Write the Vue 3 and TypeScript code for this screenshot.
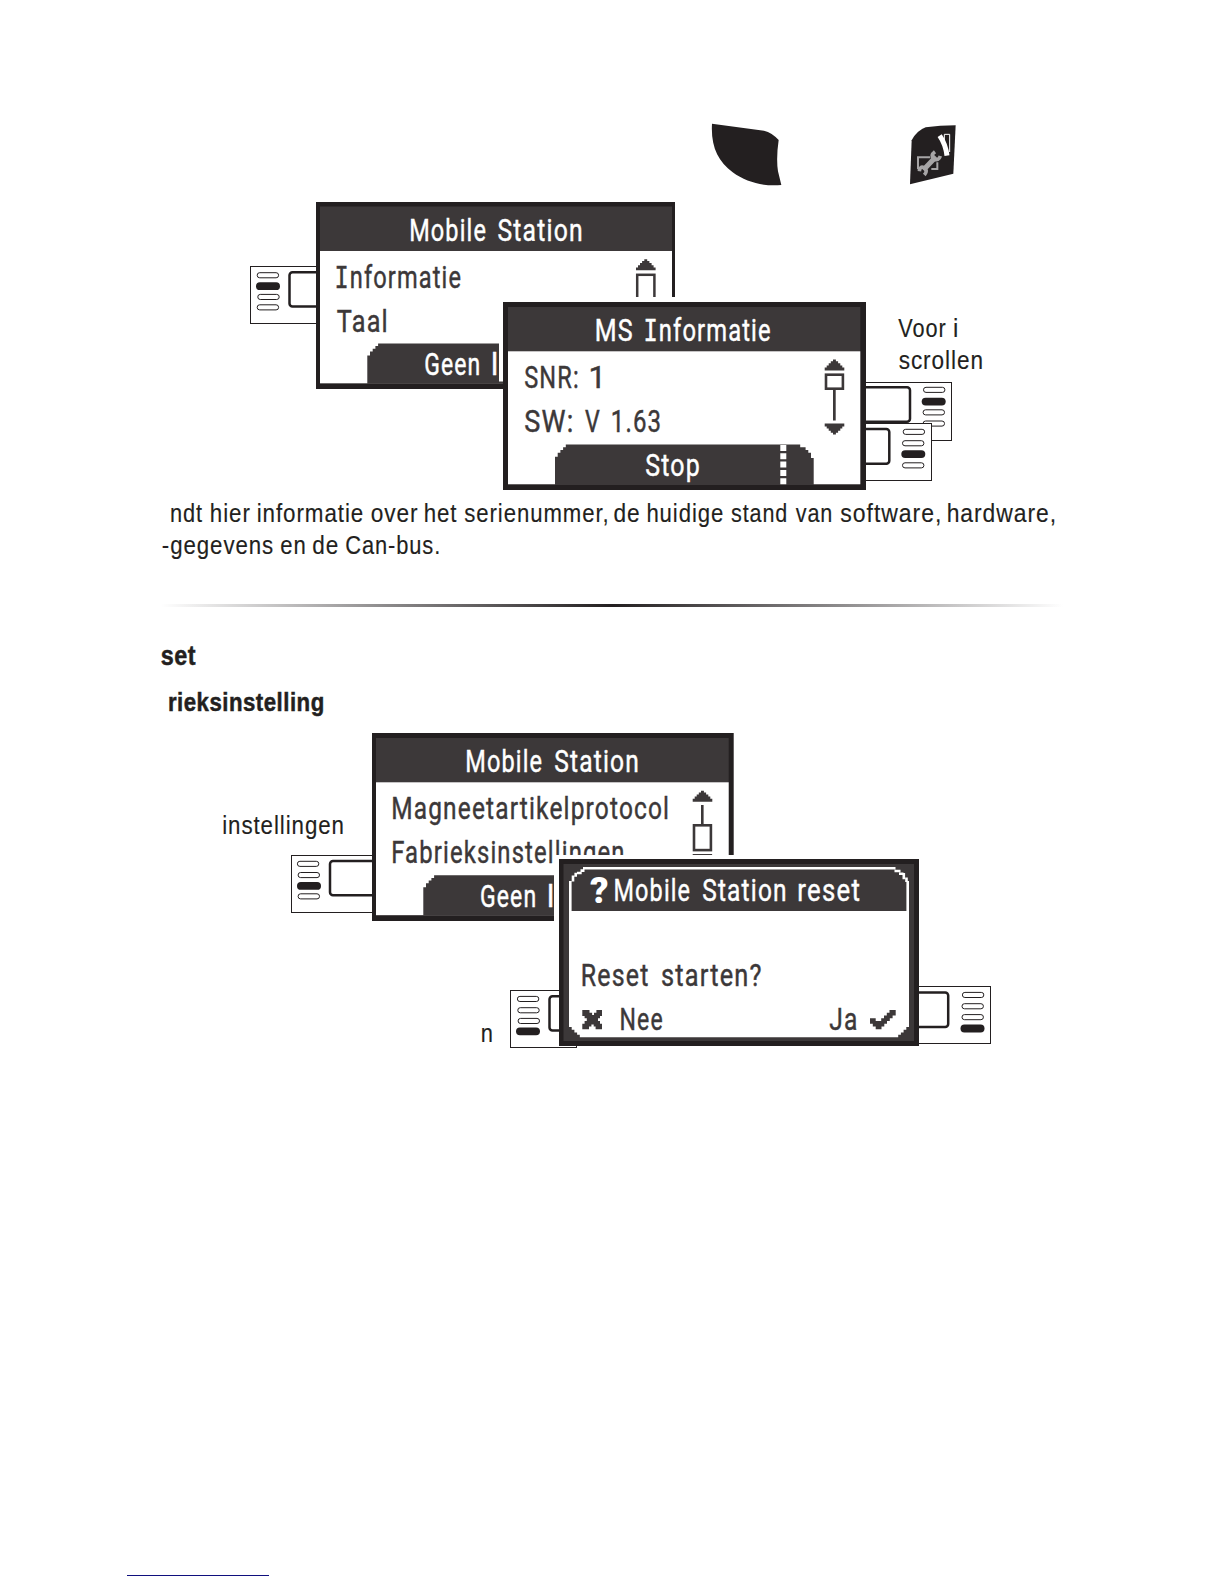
<script setup lang="ts">
import { h, type FunctionalComponent } from 'vue'

type Face = 'body' | 'bold' | 'lcd' | 'mark'
interface Word { s: string; a: number; b: number; y: number; face?: Face; size?: number; color?: string }

const faces: Record<Face, { family: string; weight: number; size: number; gap: number; ink: number; dy: number }> = {
  body: { family: '"Liberation Sans", Arial, sans-serif', weight: 400, size: 26.6, gap: 1.1, ink: 0.15, dy: 0 },
  bold: { family: '"Liberation Sans", Arial, sans-serif', weight: 700, size: 26.6, gap: 0.6, ink: 0.5, dy: 0 },
  lcd: { family: 'Roboto, sans-serif', weight: 400, size: 31, gap: 1.5, ink: 0.45, dy: 0.5 },
  mark: { family: 'Roboto, sans-serif', weight: 900, size: 37, gap: 0, ink: 0, dy: 0 },
}
const slab = '"DejaVu Sans Mono", monospace'
const pen = document.createElement('canvas').getContext('2d')!

function measure(s: string, family: string, weight: number, size: number) {
  pen.font = `${weight} ${size}px ${family}`
  const m = pen.measureText(s)
  return { left: m.actualBoundingBoxLeft, right: m.actualBoundingBoxRight, adv: m.width }
}

// Condenses a word so that its ink runs from a to b on baseline y.
const Fit: FunctionalComponent<{ w: Word }> = ({ w }) => {
  const f = faces[w.face ?? 'body']
  const size = w.size ?? f.size
  const slabbed = w.face === 'lcd' && w.s.startsWith('I')
  let left: number
  let right: number
  if (slabbed) {
    const i = measure('I', slab, 400, size)
    const rest = measure(w.s.slice(1), f.family, f.weight, size)
    left = i.left
    right = i.adv + rest.right
  } else {
    const m = measure(w.s, f.family, f.weight, size)
    left = m.left
    right = m.right
  }
  right += f.gap * (w.s.length - 1)
  const k = (w.b - w.a) / (left + right)
  const color = w.color ?? (w.face === 'lcd' ? '#3c3839' : '#231f20')
  return h('text', {
    transform: `translate(${w.a} ${w.y + f.dy}) scale(${k} 1)`,
    x: left,
    'font-family': f.family,
    'font-weight': f.weight,
    'font-size': size,
    'letter-spacing': f.gap,
    fill: color,
    stroke: color,
    'stroke-width': f.ink,
  }, slabbed ? [h('tspan', { 'font-family': slab }, 'I'), w.s.slice(1)] : w.s)
}
Fit.props = ['w']

const row = (y: number, face: Face, words: [string, number, number][], color?: string): Word[] =>
  words.map(([s, a, b]) => ({ s, a, b, y, face, color }))

const screenMain: Word[] = [
  ...row(240.3, 'lcd', [['Mobile', 410.7, 485.5], ['Station', 498.3, 581.7]], '#fff'),
  ...row(287, 'lcd', [['Informatie', 336.7, 460.7]]),
  ...row(331, 'lcd', [['Taal', 336.8, 386.5]]),
  ...row(374.7, 'lcd', [['Geen', 425, 479.5], ['l', 493, 496.8]], '#fff'),
]
const screenInfo: Word[] = [
  ...row(340.3, 'lcd', [['MS', 596.3, 632.3], ['Informatie', 645.7, 770.3]], '#fff'),
  ...row(387.3, 'lcd', [['SNR:', 525, 577.5], ['1', 590.5, 600.5]]),
  ...row(431.3, 'lcd', [['SW:', 525, 572], ['V', 585, 600], ['1.63', 612.3, 660]]),
  ...row(475.7, 'lcd', [['Stop', 646, 698.7]], '#fff'),
]
const sideNote: Word[] = [
  ...row(336.7, 'body', [['Voor', 898.3, 945.8], ['i', 954, 957.6]]),
  ...row(369, 'body', [['scrollen', 898.7, 982.3]]),
]
const paragraph: Word[] = [
  ...row(522.2, 'body', [
    ['ndt', 170.7, 202.5], ['hier', 210.7, 250], ['informatie', 257.5, 362.7], ['over', 371.5, 417.7],
    ['het', 424.5, 457], ['serienummer,', 464.3, 606.7], ['de', 614.3, 639], ['huidige', 647.2, 722.7],
    ['stand', 731, 786.7], ['van', 795.7, 831.7], ['software,', 840.3, 939.3], ['hardware,', 947.5, 1054],
  ]),
  ...row(554, 'body', [['-gegevens', 162.7, 273], ['en', 281, 305], ['de', 313, 337.5], ['Can-bus.', 346, 438.3]]),
]
const headings: Word[] = [
  { s: 'set', a: 160.7, b: 195.3, y: 664.7, face: 'bold', size: 28 },
  { s: 'rieksinstelling', a: 168.7, b: 323.2, y: 710.7, face: 'bold' },
]
const screenFactory: Word[] = [
  ...row(771.3, 'lcd', [['Mobile', 466.7, 541.7], ['Station', 555, 638]], '#fff'),
  ...row(818.3, 'lcd', [['Magneetartikelprotocol', 392.7, 668]]),
  ...row(862.3, 'lcd', [['Fabrieksinstellingen', 392.7, 623.7]]),
  ...row(906.3, 'lcd', [['Geen', 480.7, 535.3], ['l', 548.8, 552.6]], '#fff'),
]
const screenReset: Word[] = [
  { s: '?', a: 590, b: 607.7, y: 902.7, face: 'mark', color: '#fff' },
  ...row(900, 'lcd', [['Mobile', 615, 689.7], ['Station', 703, 785.7], ['reset', 799, 859.7]], '#fff'),
  ...row(985, 'lcd', [['Reset', 582.3, 648.3], ['starten?', 661.7, 761]]),
  ...row(1029.2, 'lcd', [['Nee', 621, 662.3], ['Ja', 829.3, 856.7]]),
]
const captions: Word[] = [
  ...row(833.7, 'body', [['instellingen', 223, 343.3]]),
  ...row(1041.7, 'body', [['n', 481.5, 492.2]]),
]

// Key blocks beside a display: outline, soft key and four marks, one of them lit.
interface Keys { x: number; y: number; w: number; h: number; key: [number, number, number, number]; lit: number; marks: [number, number][] }
const keysTop: Keys[] = [
  { x: 250.5, y: 266.5, w: 70, h: 57, key: [289.5, 272.2, 40, 34.3], lit: 1, marks: [[257.2, 272.7], [256, 282.3], [257.8, 294.4], [257.2, 304.8]] },
  { x: 850, y: 382.5, w: 101.5, h: 58, key: [850, 387.3, 60, 34.5], lit: 1, marks: [[923.5, 387.3], [921.7, 397.7], [923.1, 409.8], [923.1, 421]] },
  { x: 850, y: 423.5, w: 81.5, h: 57, key: [850, 429, 39.3, 34.7], lit: 2, marks: [[903.2, 429.3], [902.5, 440.7], [901.3, 450.2], [902.5, 462.8]] },
]
const keysBottom: Keys[] = [
  { x: 291.5, y: 855.5, w: 84, h: 57, key: [330, 861, 50, 34.3], lit: 2, marks: [[297.4, 861.3], [298.1, 872.5], [297, 882], [298.1, 893.8]] },
  { x: 510.5, y: 990.5, w: 66, h: 57, key: [549.5, 996.2, 30, 34.3], lit: 3, marks: [[517.4, 996.4], [517.8, 1007.7], [518.1, 1018.4], [516, 1027.4]] },
  { x: 900, y: 986.5, w: 90.5, h: 57, key: [900, 992.5, 48.2, 34.5], lit: 3, marks: [[962.4, 992.4], [962, 1003.7], [962, 1014.6], [960.5, 1024.6]] },
]

const KeyBlock: FunctionalComponent<{ k: Keys }> = ({ k }) =>
  h('g', { stroke: '#231f20' }, [
    h('rect', { x: k.x, y: k.y, width: k.w, height: k.h, fill: '#fff', 'stroke-width': 1 }),
    h('rect', { x: k.key[0], y: k.key[1], width: k.key[2], height: k.key[3], rx: 3, fill: '#fff', 'stroke-width': 2.5 }),
    ...k.marks.map(([x, y], i) => i === k.lit
      ? h('rect', { x, y, width: 24, height: 7.8, rx: 3.9, fill: '#231f20', stroke: 'none' })
      : h('rect', { x, y, width: 21.4, height: 5.1, rx: 2.5, fill: '#fff', 'stroke-width': 1 })),
  ])
KeyBlock.props = ['k']

const arrowUp = 'M8.3 0h2.9v1.8h2.2v2h2.2v2.1h2v2.2h2v2.9H0V8.1h2V5.9h2V3.8h2.1V1.8h2.2z'
const tabEdge = 'v-28.3h2.7v-4h2.7v-2.7h2.7v-2.7h2.7v-2.7h2.7'
</script>

<template>
  <main class="page">
    <svg class="block" width="1224" height="495" viewBox="0 0 1224 495">
      <g transform="translate(690 110) scale(.33333)">
        <path fill="#231f20" d="M66 41L222 62Q246 68 266 90Q258 145 264 184L274 225C225 230 170 218 128 187C84 154 62 110 66 41Z" />
        <path fill="#231f20" d="M665 91Q680 62 707 52Q750 46 797 46L790 191L660 223Z" />
        <path fill="none" stroke="#fff" stroke-width="3" d="M763 91V73H779V126" />
        <path fill="none" stroke="#fff" stroke-width="15" d="M749 77Q767 103 771 137" />
        <g fill="none" stroke="#a7a5a6">
          <path stroke-width="6" d="M684 178V142H720M742 157V177H724" />
          <path stroke-width="15" d="M700 180L738 140" />
          <path stroke-width="11" d="M735 125Q720 136 731 147Q746 154 751 138M688 184Q690 167 702 173Q715 181 703 195" />
        </g>
      </g>

      <KeyBlock v-for="k in keysTop" :key="k.y" :k="k" />

      <rect x="316" y="202" width="359" height="187" fill="#231f20" />
      <rect x="320" y="206.5" width="352" height="177" fill="#3c3839" />
      <rect x="320" y="251" width="352" height="132.3" fill="#fff" />
      <path fill="#3c3839" :d="`M367.3 383.8${tabEdge}H510V383.8z`" />
      <g transform="translate(636 259.3)" fill="#3c3839"><path :d="arrowUp" /></g>
      <rect x="637.2" y="274.8" width="17.2" height="40" fill="#fff" stroke="#3c3839" stroke-width="2.5" />
      <Fit v-for="w in screenMain" :key="w.s + w.y" :w="w" />

      <rect x="499" y="297" width="180" height="84.5" fill="#fff" />
      <rect x="503" y="302" width="363" height="188" fill="#231f20" />
      <rect x="508" y="307" width="352.3" height="178" fill="#3c3839" />
      <rect x="508" y="351.3" width="352.3" height="132.9" fill="#fff" />
      <path fill="#3c3839" :d="`M555 485${tabEdge}H800.2v2.7h5.4v2.7h2.7v2.7h2.7v5.4h2.7V485z`" />
      <path stroke="#fff" stroke-width="6" stroke-dasharray="6 2.3" d="M783.3 445V484.5" />
      <g transform="translate(824.7 359.5)" fill="#3c3839">
        <path :d="arrowUp" />
        <path :d="arrowUp" transform="translate(0 75) scale(1 -1)" />
        <rect x="8.3" y="29" width="2.7" height="32" />
        <rect x="1.3" y="15.2" width="16.9" height="14" fill="#fff" stroke="#3c3839" stroke-width="2.6" />
      </g>
      <Fit v-for="w in screenInfo" :key="w.s + w.y" :w="w" />
      <Fit v-for="w in sideNote" :key="w.s + w.y" :w="w" />
    </svg>

    <svg class="block" width="1224" height="109" viewBox="0 495 1224 109">
      <Fit v-for="w in paragraph" :key="w.s + w.a" :w="w" />
    </svg>

    <hr class="rule" />

    <svg class="block" width="1224" height="118" viewBox="0 607 1224 118">
      <Fit v-for="w in headings" :key="w.s" :w="w" />
    </svg>

    <svg class="block" width="1224" height="335" viewBox="0 725 1224 335">
      <KeyBlock v-for="k in keysBottom" :key="k.y" :k="k" />

      <rect x="372" y="733" width="361.7" height="188" fill="#231f20" />
      <rect x="376" y="738" width="352.7" height="177" fill="#3c3839" />
      <rect x="376" y="782.3" width="352.7" height="132.9" fill="#fff" />
      <path fill="#3c3839" :d="`M423.3 915.6${tabEdge}H570V915.6z`" />
      <g transform="translate(692.7 790.7)" fill="#3c3839"><path :d="arrowUp" /></g>
      <rect x="701" y="805" width="2.6" height="19" fill="#3c3839" />
      <rect x="694" y="825.3" width="16.9" height="24.8" fill="#fff" stroke="#3c3839" stroke-width="2.6" />
      <rect x="692.7" y="854" width="19.4" height="2" fill="#3c3839" />
      <Fit v-for="w in screenFactory" :key="w.s + w.y" :w="w" />

      <rect x="554" y="855" width="190" height="70" fill="#fff" />
      <rect x="559" y="859" width="360" height="187" fill="#231f20" />
      <rect x="563.5" y="864" width="350.5" height="177" fill="#3c3839" />
      <path fill="#fff" d="M569 911H909V1027H906.3V1029.7H903.6V1032.4H900.9V1034.7H898.2V1037.3H579.8V1034.7H577.1V1032.4H574.4V1029.7H571.7V1027H569z" />
      <path fill="none" stroke="#fff" stroke-width="2.6" d="M570.3 912V881M573 881.5V875.5M575.7 876.8V872.8M577 873H581.7M580.5 870.6H584.5M583 868.3H895.5M894.5 871H900.5M899 873.7H903.5M903.8 873V879.2M906.5 877.5V882M907.7 881V912" />
      <Fit v-for="w in screenReset" :key="w.s + w.y" :w="w" />
      <path fill="#3c3839" d="M582.3 1010H589.5V1012.8H592.1V1015H594V1012.8H596.4V1010H602V1016H600V1018.3H598V1021H600V1023.8H602V1029.3H595.6V1026.6H593.7V1024.5H591.4V1026.6H589V1029.3H582.3V1023.8H584.6V1021H586.8V1018.3H584.6V1016H582.3z" />
      <path fill="#3c3839" d="M870 1018.2H875.7V1021H881.2V1018.2H884V1015.5H886.8V1012.8H889.5V1010H895.7V1015.5H892.6V1018.2H889.8V1021H887V1023.8H884.3V1026.5H881.5V1029.2H875.7V1026.5H872.8V1023.8H870z" />
      <Fit v-for="w in captions" :key="w.s" :w="w" />
    </svg>

    <div class="footer-link"></div>
  </main>
</template>

<style scoped>
.page {
  display: flex;
  flex-direction: column;
  width: 1224px;
  height: 1584px;
  overflow: hidden;
  background: #fff;
}
.block {
  display: block;
  flex: none;
}
.rule {
  flex: none;
  width: 902px;
  height: 3px;
  margin: 0 0 0 161px;
  border: 0;
  background: linear-gradient(90deg, #fff, #8c8a8b 25%, #231f20 50%, #8c8a8b 75%, #fff);
}
.footer-link {
  width: 142px;
  height: 1px;
  margin: auto 0 8px 127px;
  background: #10107e;
}
</style>
